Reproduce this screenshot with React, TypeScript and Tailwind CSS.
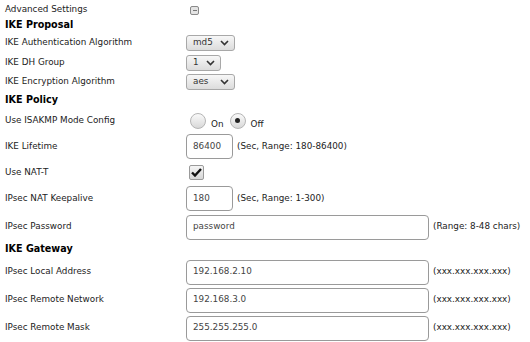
import React from 'react';

const font = { fontFamily: '"DejaVu Sans", Verdana, sans-serif' };

const Chevron = () => (
  <svg width="9" height="6" viewBox="0 0 9 6" className="shrink-0">
    <path d="M1 1 L4.5 4.5 L8 1" fill="none" stroke="#333" strokeWidth="1.6" />
  </svg>
);

const Select = ({ value, w }: { value: string; w: string }) => (
  <div
    className={`${w} h-[16px] flex items-center justify-between pl-[6px] pr-[5px] rounded-[3px] border border-[#a8a8a8] bg-gradient-to-b from-[#f7f7f7] to-[#dcdcdc] text-[8.8px] text-[#333]`}
  >
    <span>{value}</span>
    <Chevron />
  </div>
);

const TextBox = ({ value, w }: { value: string; w: string }) => (
  <div
    className={`${w} h-[25px] flex items-center pl-[6px] rounded-[4px] border border-[#9a9a9a] bg-white text-[8.8px] text-[#444]`}
  >
    {value}
  </div>
);

const Radio = ({ checked }: { checked?: boolean }) => (
  <div className="w-[16px] h-[16px] rounded-full border border-[#b5b5b5] bg-gradient-to-b from-[#fafafa] to-[#d8d8d8] flex items-center justify-center">
    {checked && <div className="w-[5px] h-[5px] rounded-full bg-[#222]" />}
  </div>
);

const Row = ({ label, h, children }: { label: string; h: string; children?: React.ReactNode }) => (
  <div className={`flex items-center ${h}`}>
    <div className="w-[181px] shrink-0 text-[8.8px] text-[#222]">{label}</div>
    <div className="flex items-center">{children}</div>
  </div>
);

const Heading = ({ text, h }: { text: string; h: string }) => (
  <div className={`flex items-center ${h} text-[9.6px] font-bold text-black`}>{text}</div>
);

const Hint = ({ text }: { text: string }) => (
  <span className="ml-[4px] text-[8.8px] text-[#222]">{text}</span>
);

export default function App() {
  return (
    <div className="w-[530px] h-[342px] bg-white pl-[5px] pt-[2px] overflow-hidden" style={font}>
      <Row label="Advanced Settings" h="h-[16px]">
        <div className="ml-[4px] w-[9px] h-[9px] rounded-[2px] border border-[#8a8a8a] bg-[#e4e4e4] flex items-center justify-center">
          <div className="w-[4px] h-[1px] bg-[#777]" />
        </div>
      </Row>
      <Heading text="IKE Proposal" h="h-[15px]" />
      <Row label="IKE Authentication Algorithm" h="h-[20px]">
        <Select value="md5" w="w-[49px]" />
      </Row>
      <Row label="IKE DH Group" h="h-[19px]">
        <Select value="1" w="w-[35px]" />
      </Row>
      <Row label="IKE Encryption Algorithm" h="h-[19px]">
        <Select value="aes" w="w-[49px]" />
      </Row>
      <Heading text="IKE Policy" h="h-[18px]" />
      <Row label="Use ISAKMP Mode Config" h="h-[23px]">
        <div className="ml-[4px] flex items-end">
          <Radio />
          <span className="ml-[5px] text-[8.8px] text-[#222] leading-none">On</span>
          <div className="ml-[6px]"><Radio checked /></div>
          <span className="ml-[5px] text-[8.8px] text-[#222] leading-none">Off</span>
        </div>
      </Row>
      <Row label="IKE Lifetime" h="h-[29px]">
        <TextBox value="86400" w="w-[47px]" />
        <Hint text="(Sec, Range: 180-86400)" />
      </Row>
      <Row label="Use NAT-T" h="h-[23px]">
        <div className="ml-[3px] w-[15px] h-[15px] rounded-[2px] border border-[#9a9a9a] bg-gradient-to-b from-[#f5f5f5] to-[#d6d6d6] flex items-center justify-center">
          <svg width="11" height="9" viewBox="0 0 11 9">
            <path d="M1 4.5 L4 7.5 L10 1" fill="none" stroke="#111" strokeWidth="2.4" />
          </svg>
        </div>
      </Row>
      <Row label="IPsec NAT Keepalive" h="h-[29px]">
        <TextBox value="180" w="w-[47px]" />
        <Hint text="(Sec, Range: 1-300)" />
      </Row>
      <Row label="IPsec Password" h="h-[28px]">
        <TextBox value="password" w="w-[243px]" />
        <Hint text="(Range: 8-48 chars)" />
      </Row>
      <Heading text="IKE Gateway" h="h-[17px]" />
      <Row label="IPsec Local Address" h="h-[28px]">
        <TextBox value="192.168.2.10" w="w-[243px]" />
        <Hint text="(xxx.xxx.xxx.xxx)" />
      </Row>
      <Row label="IPsec Remote Network" h="h-[28px]">
        <TextBox value="192.168.3.0" w="w-[243px]" />
        <Hint text="(xxx.xxx.xxx.xxx)" />
      </Row>
      <Row label="IPsec Remote Mask" h="h-[28px]">
        <TextBox value="255.255.255.0" w="w-[243px]" />
        <Hint text="(xxx.xxx.xxx.xxx)" />
      </Row>
    </div>
  );
}
